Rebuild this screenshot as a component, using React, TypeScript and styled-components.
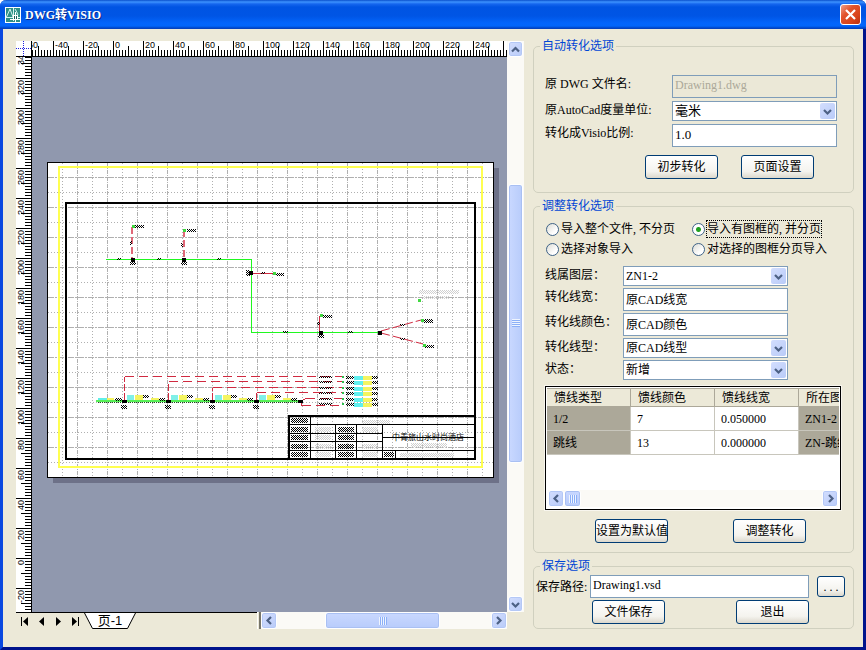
import React from "react";
import styled, { createGlobalStyle, css } from "styled-components";

const GlobalStyle = createGlobalStyle`
  * { box-sizing: border-box; }
  body {
    margin: 0;
    background: #ffffff;
    font-family: "Liberation Serif", "Noto Sans CJK SC", serif;
    font-size: 12px;
    line-height: 16px;
    color: #000000;
  }
  button, input, select { font: inherit; color: inherit; }
`;

/* ---------- window frame ---------- */

const Window = styled.main`
  display: flex;
  flex-direction: column;
  min-height: 100vh;
  background: #ece9d8;
  border: 3px solid #0a3fd8;
  border-color: #0831d9 #00138c #00138c #0a48e0;
  border-top: 0;
  border-radius: 6px 6px 0 0;
`;

const TitleBar = styled.header`
  display: flex;
  align-items: center;
  gap: 4px;
  height: 29px;
  margin: 0 -3px;
  padding: 0 5px;
  border-radius: 6px 6px 0 0;
  background: linear-gradient(
    #0a50cc 0px, #3d93ff 2px, #1566ee 4px, #0054e3 7px, #0055e5 16px,
    #0365fb 23px, #0266fa 26px, #0046c8 28px, #0a3fb4 29px
  );
`;

const Title = styled.h1`
  flex: 1;
  margin: 0;
  font-size: 12px;
  line-height: 20px;
  font-weight: bold;
  color: #ffffff;
  text-shadow: 1px 1px 0 #0a2a8a;
`;

const CloseButton = styled.button`
  display: grid;
  place-items: center;
  width: 21px;
  height: 21px;
  padding: 0;
  border: 1px solid #ffffff;
  border-radius: 3px;
  background: linear-gradient(135deg, #f0a08a 0%, #e2532b 35%, #d9441a 70%, #b93010 100%);
`;

const Body = styled.div`
  flex: 1;
  display: flex;
  gap: 9px;
  padding: 9px 9px 18px 13px;
`;

/* ---------- drawing viewer ---------- */

const Viewer = styled.section`
  flex: 1;
  min-width: 0;
  margin-top: 3px;
  display: grid;
  grid-template-columns: 16px minmax(0, 1fr) 17px;
  grid-template-rows: 16px minmax(0, 1fr) 17px;
`;

const Plot = styled.svg`
  display: block;
  width: 100%;
  height: 100%;
  overflow: hidden;
  font-family: "Liberation Sans", sans-serif;
  font-size: 9px;
`;

const FooterBar = styled.div`
  grid-column: 1 / 3;
  display: flex;
`;

const PageTabs = styled.nav`
  display: flex;
  width: 245px;
  height: 17px;
`;

const TabStrip = styled.div`
  flex: 1;
  display: flex;
  border-top: 1px solid #000000;
`;

const NavButton = styled.button`
  display: grid;
  place-items: center;
  width: 17px;
  height: 16px;
  padding: 0;
  border: 0;
  background: none;
`;

const PageTab = styled.button`
  display: grid;
  width: 52px;
  height: 16px;
  padding: 0;
  border: 0;
  background: none;
  & > * { grid-area: 1 / 1; }
`;

const TabText = styled.span`
  z-index: 1;
  text-align: center;
  font-family: "Liberation Sans", "Noto Sans CJK SC", sans-serif;
  font-size: 13px;
  line-height: 16px;
`;

const Splitter = styled.span`
  width: 4px;
  border-right: 2px solid #77756a;
  border-left: 1px solid #ffffff;
`;

/* ---------- scroll bars ---------- */

const ScrollBar = styled.div<{ $vertical?: boolean }>`
  flex: 1;
  display: flex;
  flex-direction: ${(p) => (p.$vertical ? "column" : "row")};
  padding: ${(p) => (p.$vertical ? "0 1px" : "0")};
  background: #fbfaf6;
`;

const ScrollColumn = styled.div`
  grid-column: 3;
  grid-row: 1 / 3;
  display: flex;
`;

const ScrollButton = styled.button`
  display: grid;
  place-items: center;
  flex: 0 0 16px;
  min-height: 16px;
  padding: 0;
  border: 1px solid #ffffff;
  border-radius: 3px;
  background: linear-gradient(135deg, #d3defe, #b9cbf8);
  box-shadow: inset 0 0 0 1px #b4c8f6;
`;

const TrackGap = styled.span<{ $grow: number }>`
  flex: ${(p) => p.$grow} 1 0;
`;

const Thumb = styled.span<{ $grow?: number; $vertical?: boolean }>`
  display: grid;
  place-items: center;
  flex: ${(p) => (p.$grow ? `${p.$grow} 1 0` : "0 0 17px")};
  border: 1px solid #ffffff;
  border-radius: 3px;
  background: linear-gradient(${(p) => (p.$vertical ? "to right" : "to bottom")}, #c9d8ff, #b8ccfb);
  box-shadow: inset 0 0 0 1px #a9c0f3;
`;

const Grip = styled.span<{ $vertical?: boolean }>`
  width: 8px;
  height: 8px;
  background: repeating-linear-gradient(
    ${(p) => (p.$vertical ? "to bottom" : "to right")},
    #eef4fe 0 1px, #8cb0f8 1px 2px
  );
`;

/* ---------- option panel ---------- */

const Panel = styled.form`
  flex: 0 0 321px;
  display: flex;
  flex-direction: column;
  gap: 5px;
`;

const Group = styled.fieldset`
  min-width: 0;
  margin: 0;
  padding: 0 2px;
  border: 1px solid #d0d0bf;
  border-radius: 5px;
`;

const Legend = styled.legend`
  height: 16px;
  margin-left: 4px;
  padding: 0 2px;
  color: #0046d5;
`;

const Content = styled.div<{ $top: number; $bottom: number; $inset?: boolean }>`
  padding: ${(p) => p.$top}px 0 ${(p) => p.$bottom}px ${(p) => (p.$inset ? 9 : 0)}px;
`;

const FormGrid = styled.div<{ $label: number; $gap: number; $line: number }>`
  display: grid;
  grid-template-columns: ${(p) => p.$label}px 165px;
  row-gap: ${(p) => p.$gap}px;
  line-height: ${(p) => p.$line}px;
`;

const Label = styled.label`
  white-space: nowrap;
`;

const field = css`
  min-width: 0;
  width: 100%;
  margin: 0;
  border: 1px solid #7f9db9;
  border-radius: 0;
  background: #ffffff;
`;

const TextInput = styled.input<{ $large?: boolean }>`
  ${field}
  height: 23px;
  padding: 0 2px 2px;
  font-size: ${(p) => (p.$large ? 13 : 12)}px;
  &:disabled {
    background: #ebe8d7;
    color: #aca899;
  }
`;

const ComboBox = styled.span`
  display: grid;
  height: 20px;
  & > * { grid-area: 1 / 1; }
`;

const Select = styled.select<{ $large?: boolean }>`
  ${field}
  appearance: none;
  height: 20px;
  padding: 0 18px 0 2px;
  font-size: ${(p) => (p.$large ? 13 : 12)}px;
`;

const ComboArrow = styled.span`
  z-index: 1;
  justify-self: end;
  align-self: center;
  display: grid;
  place-items: center;
  width: 15px;
  height: 16px;
  margin-right: 2px;
  border-radius: 2px;
  background: linear-gradient(135deg, #d3defe, #b9cbf8);
  pointer-events: none;
`;

const ButtonRow = styled.div<{ $top: number; $left: number; $gap: number }>`
  display: flex;
  gap: ${(p) => p.$gap}px;
  margin-top: ${(p) => p.$top}px;
  padding-left: ${(p) => p.$left}px;
`;

const Button = styled.button<{ $small?: boolean }>`
  width: ${(p) => (p.$small ? 28 : 73)}px;
  height: ${(p) => (p.$small ? 21 : 24)}px;
  padding: 0;
  border: 1px solid #003c74;
  border-radius: 3px;
  background: linear-gradient(#ffffff, #f4f3ee 70%, #dcd8cc);
  line-height: 16px;
  white-space: nowrap;
`;

const RadioGrid = styled.div`
  display: grid;
  grid-template-columns: 146px 1fr;
  grid-auto-rows: 20px;
  margin-bottom: 7px;
`;

const RadioLabel = styled.label`
  display: flex;
  align-items: center;
  gap: 2px;
  white-space: nowrap;
`;

const RadioInput = styled.input`
  appearance: none;
  width: 13px;
  height: 13px;
  margin: 0 0 0 1px;
  border: 1px solid #3f6387;
  border-radius: 50%;
  background: linear-gradient(135deg, #dcdcd5, #ffffff 70%);
  &:checked {
    background: radial-gradient(circle, #21a121 0 2px, #ffffff 3px);
  }
`;

const RadioText = styled.span<{ $focused?: boolean }>`
  outline: ${(p) => (p.$focused ? "1px dotted #000000" : "none")};
`;

const SaveRow = styled.div`
  display: flex;
  align-items: center;
  gap: 8px;
  padding-right: 6px;
`;

const SaveField = styled.span`
  flex: 1;
  display: grid;
  grid-template-columns: 54px 1fr;
  align-items: center;
`;

/* ---------- feeder list ---------- */

const List = styled.div`
  display: flex;
  flex-direction: column;
  width: 296px;
  height: 124px;
  margin-top: 6px;
  padding: 1px;
  border: 1px solid #000000;
  outline: 1px solid #f8f6ee;
  background: #ffffff;
  overflow: hidden;
`;

const TableClip = styled.div`
  flex: 1;
  overflow: hidden;
`;

const Table = styled.table`
  width: 336px;
  table-layout: fixed;
  border-collapse: separate;
  border-spacing: 0;
`;

const HeadCell = styled.th`
  height: 19px;
  padding: 0 7px;
  font-weight: normal;
  text-align: left;
  white-space: nowrap;
  background: #ece9d8;
  border-right: 1px solid #aca899;
  border-bottom: 1px solid #aca899;
  border-top: 1px solid #aca899;
`;

const Cell = styled.td<{ $shaded?: boolean }>`
  height: 24px;
  padding: 0 6px;
  white-space: nowrap;
  background: ${(p) => (p.$shaded ? "#aca899" : "#ffffff")};
  border-right: 1px solid #c8c6bc;
  border-bottom: 1px solid #c8c6bc;
`;

const ListScroll = styled.div`
  display: flex;
  height: 17px;
  margin: 0 1px 1px;
`;

/* ---------- small drawings ---------- */

type Direction = "up" | "down" | "left" | "right";
const chevrons: Record<Direction, string> = {
  up: "M1 6.5 L4.5 3 L8 6.5",
  down: "M1 3 L4.5 6.5 L8 3",
  left: "M6 1 L2.5 4.5 L6 8",
  right: "M3 1 L6.5 4.5 L3 8",
};

const Chevron = ({ to }: { to: Direction }) => (
  <svg width="9" height="9" viewBox="0 0 9 9" aria-hidden="true">
    <path d={chevrons[to]} fill="none" stroke="#4d6185" strokeWidth="2.2" />
  </svg>
);

const AppIcon = () => (
  <svg width="16" height="16" viewBox="0 0 16 16" aria-hidden="true">
    <rect x="0.5" y="0.5" width="15" height="15" fill="#2f8f86" stroke="#ffffff" />
    <path d="M1 11 L5 2 L8 10 M8.5 1 V14 M1 10.5 H15 M10 2 Q12 5 13 8" fill="none" stroke="#d8f4ee" />
    <rect x="8.5" y="8.5" width="4" height="4" fill="#1c5d58" stroke="#ffffff" />
    <path d="M10.5 5 V15 M5 12.5 H15" stroke="#ffffff" fill="none" />
  </svg>
);

/* Length in pixels of a ruler, kept up to date while the window is resized. */
function useLength(axis: "width" | "height") {
  const ref = React.useRef<SVGSVGElement>(null);
  const [length, setLength] = React.useState(0);
  React.useLayoutEffect(() => {
    const node = ref.current;
    if (!node) return;
    const measure = () => setLength(Math.round(node.getBoundingClientRect()[axis]));
    measure();
    const observer = new ResizeObserver(measure);
    observer.observe(node);
    return () => observer.disconnect();
  }, [axis]);
  return [ref, length] as const;
}

const count = (n: number) => Array.from({ length: Math.max(0, Math.ceil(n)) }, (_, i) => i);
const tickStart = (i: number) => (i % 10 === 0 ? 0 : i % 5 === 0 ? 5 : 9);

/* One tick is 3px (2 mm); every tenth carries a number. */
const HorizontalRuler = () => {
  const [ref, length] = useLength("width");
  return (
    <Plot ref={ref} aria-label="水平标尺" shapeRendering="crispEdges">
      <rect width="100%" height="16" fill="#ffffff" />
      {count((length + 9) / 3).map((i) => (
        <rect key={i} x={i * 3 - 9} y={tickStart(i)} width="1" height="16" />
      ))}
      {count((length + 3) / 30).map((i) => (
        <text key={i} x={i * 30 - 7} y="7">{i * 20 - 60}</text>
      ))}
      <rect y="15" width="100%" height="1" />
    </Plot>
  );
};

const VerticalRuler = () => {
  const [ref, length] = useLength("height");
  return (
    <Plot ref={ref} aria-label="垂直标尺" shapeRendering="crispEdges">
      <rect width="16" height="100%" fill="#ffffff" />
      {count((length + 9) / 3).map((i) => (
        <rect key={i} x={tickStart(i)} y={i * 3 - 9} width="16" height="1" />
      ))}
      {count((length + 3) / 30).map((i) => (
        <text key={i} transform={`translate(8 ${i * 30 - 7}) rotate(-90)`} textAnchor="end">{340 - i * 20}</text>
      ))}
      <rect x="15" width="1" height="100%" />
    </Plot>
  );
};

const RulerOrigin = () => (
  <Plot aria-hidden="true" shapeRendering="crispEdges">
    <rect width="16" height="16" fill="#ffffff" />
    <path d="M7.5 0 V15 M0 7.5 H15" stroke="#2020e0" strokeDasharray="1 1" />
    <path d="M15.5 0 V16 M0 15.5 H16" stroke="#000000" />
  </Plot>
);

type Box = [number, number, number, number];

const labelHatches: Box[] = [
  [135, 225, 9, 3], [187, 229, 9, 3], [130, 262, 6, 3], [181, 262, 6, 3],
  [130, 241, 2, 4], [181, 243, 2, 4], [117, 258, 4, 2], [157, 258, 4, 2], [217, 258, 4, 2],
  [246, 270, 4, 6], [261, 272, 4, 2], [276, 273, 8, 3], [283, 331, 5, 2], [348, 331, 5, 2],
  [318, 335, 6, 3], [317, 322, 3, 3], [323, 315, 9, 3], [400, 324, 5, 2], [400, 338, 5, 2],
  [424, 319, 9, 4], [425, 345, 9, 3],
];

const blockHatches: Box[] = [
  [291, 418, 17, 5], [291, 427, 17, 5], [291, 435, 17, 5], [291, 444, 17, 5], [291, 452, 17, 5],
  [338, 427, 16, 5], [338, 435, 16, 5], [338, 444, 16, 5], [338, 452, 16, 5], [384, 452, 10, 5],
];

const faintHatches: Box[] = [
  [419, 290, 40, 4], [423, 296, 26, 3], [362, 420, 28, 4], [315, 427, 16, 5], [315, 435, 16, 5],
  [315, 444, 16, 5], [315, 452, 16, 5], [362, 427, 16, 5], [362, 444, 16, 5], [362, 452, 16, 5],
  [411, 443, 36, 5], [400, 453, 54, 4],
];

const stations = [124, 168, 212, 256, 300];
const legendRows = [376, 381, 387, 392, 398, 403];

const boxes = (list: Box[], fill: string) =>
  list.map(([x, y, w, h]) => <rect key={`${x}-${y}`} x={x} y={y} width={w} height={h} fill={fill} />);

const Drawing = () => (
  <Plot role="img" aria-label="绘图页" shapeRendering="crispEdges">
    <defs>
      <pattern id="hatch" width="2" height="2" patternUnits="userSpaceOnUse">
        <path d="M0 0h1v1h-1z M1 1h1v1h-1z" fill="#000000" />
      </pattern>
      <pattern id="faint" width="2" height="2" patternUnits="userSpaceOnUse">
        <path d="M0 0h1v1h-1z M1 1h1v1h-1z" fill="#d0d0d0" />
      </pattern>
    </defs>
    <rect width="100%" height="100%" fill="#9098ae" />
    <g transform="translate(-32 -57)">
      <rect x="53" y="168" width="446" height="315" fill="#6d7188" />
      <rect x="47.5" y="162.5" width="446" height="315" fill="#ffffff" stroke="#000000" />
      <g stroke="#b0b0b0" fill="none">
        {Array.from({ length: 29 }, (_, i) => 62 + i * 15).map((x, i) => (
          <path key={x} d={`M${x}.5 163 V477`} strokeDasharray={i % 2 ? "4 1 1 1" : "1 2"} />
        ))}
        {Array.from({ length: 20 }, (_, i) => 177 + i * 15).map((y, i) => (
          <path key={y} d={`M48 ${y}.5 H493`} strokeDasharray={i % 2 ? "1 2" : "6 1 2 1"} />
        ))}
      </g>
      <rect x="59" y="167" width="423" height="300" fill="none" stroke="#ffff50" strokeWidth="2" />
      <rect x="66" y="203" width="409" height="256" fill="none" stroke="#000000" strokeWidth="2" />

      <g fill="none" stroke="#d02a40">
        <path d="M132 227 V258 M184 230 V258" stroke="#e06878" strokeWidth="2" strokeDasharray="7 3" />
        <path d="M253 273.5 H273 M319.5 316 V331" />
        <path d="M381 331 L421 320 M381 333 L423 344" strokeDasharray="9 3" shapeRendering="auto" />
        <path
          d="M124.5 376.5 H343 M168.5 381.5 H343 M212.5 387.5 H343 M256.5 392.5 H343 M306 398.5 H343 M302 405.5 H343"
          strokeDasharray="9 5"
        />
        <path
          d="M124.5 400 V376.5 M168.5 400 V381.5 M212.5 400 V387.5 M256.5 400 V392.5 M301 401 L306 398.5 M301 402 L302 405.5"
          strokeDasharray="7 2"
        />
      </g>
      <path d="M106 259.5 H251.5 V332.5 H380" fill="none" stroke="#20f820" />

      <rect x="96" y="400" width="204" height="2" fill="#58f058" />
      <rect x="98" y="398" width="9" height="2" fill="#60f0e8" />
      <rect x="107" y="398" width="7" height="2" fill="#f4f460" />
      <rect x="115" y="398" width="7" height="3" fill="url(#hatch)" />
      {stations.slice(0, 4).map((x) => (
        <g key={x}>
          <rect x={x + 3} y="395" width="7" height="5" fill="#80f0e8" />
          <rect x={x + 11} y="395" width="8" height="5" fill="#f4f460" />
          <rect x={x + 19} y="395" width="6" height="3" fill="url(#hatch)" />
          <rect x={x + 27} y="398" width="8" height="2" fill="#f4f460" />
          <rect x={x + 35} y="398" width="6" height="3" fill="url(#hatch)" />
        </g>
      ))}
      <path d="M98 402.5 H300" stroke="#205020" strokeDasharray="1 1" />
      {stations.map((x) => (
        <g key={x}>
          <rect x={x - 2} y="400" width="5" height="3" />
          {x < 300 && <rect x={x - 3} y="405" width="6" height="4" fill="url(#hatch)" />}
        </g>
      ))}

      {legendRows.map((y) => (
        <g key={y}>
          <rect x="319" y={y} width="13" height="2" fill="url(#hatch)" />
          <rect x="342" y={y} width="2" height="2" fill="#30c050" />
          <rect x="346" y={y} width="8" height="3" fill="url(#hatch)" />
          <rect x="354" y={y} width="9" height="4" fill="#60f0f0" />
          <rect x="363" y={y} width="9" height="4" fill="#f4f460" />
          <rect x="372" y={y} width="6" height="3" fill="url(#hatch)" />
        </g>
      ))}

      {boxes(labelHatches, "url(#hatch)")}
      {boxes(blockHatches, "url(#hatch)")}
      {boxes(faintHatches, "url(#faint)")}

      <g fill="#40d840">
        {[[133, 226], [184, 230], [274, 273], [321, 315], [419, 300], [422, 320], [424, 345]].map(([x, y]) => (
          <rect key={`${x}-${y}`} x={x - 1} y={y - 1} width="3" height="3" />
        ))}
      </g>
      {[[133, 260], [184, 260], [251, 273], [321, 333], [380, 333]].map(([x, y]) => (
        <rect key={`${x}-${y}`} x={x - 2} y={y - 2} width="4" height="4" />
      ))}

      <g fill="none" stroke="#000000">
        <path d="M289 459 V416 H475" strokeWidth="2" />
        <path d="M289 424.5 H475 M289 433.5 H382 M289 441.5 H382 M289 450.5 H475 M382 437.5 H475" />
        <path d="M310.5 417 V458 M335.5 425 V458 M356.5 425 V458 M382.5 425 V458 M395.5 450 V458" />
      </g>
      <text x="392" y="440" fontSize="8" fontFamily='"Noto Sans CJK SC", sans-serif'>中青旅山水时尚酒店</text>
    </g>
  </Plot>
);

/* ---------- composed parts ---------- */

interface ComboProps {
  id: string;
  options: string[];
  large?: boolean;
}

const Combo = ({ id, options, large }: ComboProps) => (
  <ComboBox>
    <Select id={id} $large={large}>
      {options.map((o) => <option key={o}>{o}</option>)}
    </Select>
    <ComboArrow><Chevron to="down" /></ComboArrow>
  </ComboBox>
);

const navShapes: [string, string][] = [
  ["第一页", "M1 0 H2 V9 H1 Z M8 0 V9 L3 4.5 Z"],
  ["上一页", "M7 0 V9 L2 4.5 Z"],
  ["下一页", "M2 0 V9 L7 4.5 Z"],
  ["最后一页", "M1 0 V9 L6 4.5 Z M7 0 H8 V9 H7 Z"],
];

const importModes = ["导入整个文件, 不分页", "导入有图框的, 并分页", "选择对象导入", "对选择的图框分页导入"];

const feeders = [
  ["1/2", "7", "0.050000", "ZN1-2"],
  ["跳线", "13", "0.000000", "ZN-跳线"],
];

export default function App() {
  const [mode, setMode] = React.useState(1);

  return (
    <>
      <GlobalStyle />
      <Window>
        <TitleBar>
          <AppIcon />
          <Title>DWG转VISIO</Title>
          <CloseButton aria-label="关闭">
            <svg width="13" height="13" viewBox="0 0 13 13" aria-hidden="true">
              <path d="M2 2 L11 11 M11 2 L2 11" stroke="#ffffff" strokeWidth="2.2" />
            </svg>
          </CloseButton>
        </TitleBar>

        <Body>
          <Viewer>
            <RulerOrigin />
            <HorizontalRuler />
            <ScrollColumn>
              <ScrollBar $vertical>
                <ScrollButton aria-label="向上滚动"><Chevron to="up" /></ScrollButton>
                <TrackGap $grow={127} />
                <Thumb $grow={278} $vertical><Grip $vertical /></Thumb>
                <TrackGap $grow={134} />
                <ScrollButton aria-label="向下滚动"><Chevron to="down" /></ScrollButton>
              </ScrollBar>
            </ScrollColumn>
            <VerticalRuler />
            <Drawing />
            <FooterBar>
              <PageTabs>
                <TabStrip>
                  {navShapes.map(([name, d]) => (
                    <NavButton key={name} aria-label={name}>
                      <svg width="9" height="9" viewBox="0 0 9 9" aria-hidden="true"><path d={d} /></svg>
                    </NavButton>
                  ))}
                  <PageTab>
                    <svg width="52" height="16" viewBox="0 0 52 16" aria-hidden="true">
                      <path d="M0.5 0 L8.5 15.5 H43.5 L51.5 0" fill="#ffffff" stroke="#000000" />
                    </svg>
                    <TabText>页-1</TabText>
                  </PageTab>
                </TabStrip>
                <Splitter />
              </PageTabs>
              <ScrollBar>
                <ScrollButton aria-label="向左滚动"><Chevron to="left" /></ScrollButton>
                <TrackGap $grow={48} />
                <Thumb $grow={115}><Grip /></Thumb>
                <TrackGap $grow={51} />
                <ScrollButton aria-label="向右滚动"><Chevron to="right" /></ScrollButton>
              </ScrollBar>
            </FooterBar>
          </Viewer>

          <Panel onSubmit={(e) => e.preventDefault()}>
            <Group>
              <Legend>自动转化选项</Legend>
              <Content $top={21} $bottom={13} $inset>
                <FormGrid $label={127} $gap={3} $line={18}>
                  <Label htmlFor="source">原 DWG 文件名:</Label>
                  <TextInput id="source" defaultValue="Drawing1.dwg" disabled />
                  <Label htmlFor="unit">原AutoCad度量单位:</Label>
                  <Combo id="unit" options={["毫米", "英寸"]} large />
                  <Label htmlFor="scale">转化成Visio比例:</Label>
                  <TextInput id="scale" defaultValue="1.0" $large />
                </FormGrid>
                <ButtonRow $top={8} $left={100} $gap={23}>
                  <Button type="button">初步转化</Button>
                  <Button type="button">页面设置</Button>
                </ButtonRow>
              </Content>
            </Group>

            <Group>
              <Legend>调整转化选项</Legend>
              <Content $top={5} $bottom={9} $inset>
                <RadioGrid>
                  {importModes.map((text, i) => (
                    <RadioLabel key={text}>
                      <RadioInput type="radio" name="mode" checked={mode === i} onChange={() => setMode(i)} />
                      <RadioText $focused={mode === i}>{text}</RadioText>
                    </RadioLabel>
                  ))}
                </RadioGrid>
                <FormGrid $label={78} $gap={2} $line={18}>
                  <Label htmlFor="layer">线属图层：</Label>
                  <Combo id="layer" options={["ZN1-2", "ZN-跳线"]} />
                  <Label htmlFor="width">转化线宽：</Label>
                  <TextInput id="width" defaultValue="原CAD线宽" />
                  <Label htmlFor="color">转化线颜色：</Label>
                  <TextInput id="color" defaultValue="原CAD颜色" />
                  <Label htmlFor="type">转化线型：</Label>
                  <Combo id="type" options={["原CAD线型"]} />
                  <Label htmlFor="state">状态：</Label>
                  <Combo id="state" options={["新增", "原有"]} />
                </FormGrid>
                <List>
                  <TableClip>
                    <Table>
                      <thead>
                        <tr>
                          {["馈线类型", "馈线颜色", "馈线线宽", "所在图层"].map((h) => (
                            <HeadCell key={h} scope="col">{h}</HeadCell>
                          ))}
                        </tr>
                      </thead>
                      <tbody>
                        {feeders.map((row) => (
                          <tr key={row[0]}>
                            {row.map((v, i) => (
                              <Cell key={i} $shaded={i === 0 || i === 3}>{v}</Cell>
                            ))}
                          </tr>
                        ))}
                      </tbody>
                    </Table>
                  </TableClip>
                  <ListScroll>
                    <ScrollBar>
                      <ScrollButton type="button" aria-label="列表向左"><Chevron to="left" /></ScrollButton>
                      <Thumb><Grip /></Thumb>
                      <TrackGap $grow={1} />
                      <ScrollButton type="button" aria-label="列表向右"><Chevron to="right" /></ScrollButton>
                    </ScrollBar>
                  </ListScroll>
                </List>
                <ButtonRow $top={9} $left={50} $gap={65}>
                  <Button type="button">设置为默认值</Button>
                  <Button type="button">调整转化</Button>
                </ButtonRow>
              </Content>
            </Group>

            <Group>
              <Legend>保存选项</Legend>
              <Content $top={1} $bottom={4}>
                <SaveRow>
                  <SaveField>
                    <Label htmlFor="path">保存路径:</Label>
                    <TextInput id="path" defaultValue="Drawing1.vsd" />
                  </SaveField>
                  <Button type="button" $small aria-label="浏览">. . .</Button>
                </SaveRow>
                <ButtonRow $top={2} $left={56} $gap={71}>
                  <Button type="button">文件保存</Button>
                  <Button type="button">退出</Button>
                </ButtonRow>
              </Content>
            </Group>
          </Panel>
        </Body>
      </Window>
    </>
  );
}
